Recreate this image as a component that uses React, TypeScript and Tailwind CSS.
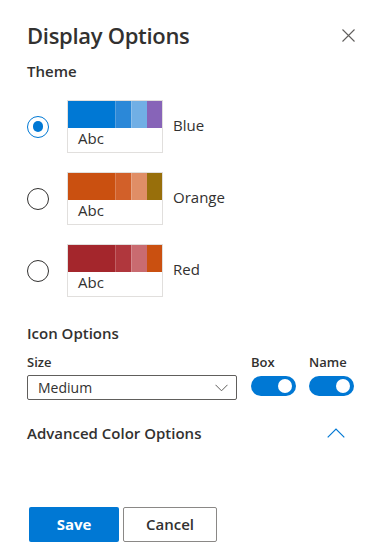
import React, { useState } from "react";

const themes = [
  {
    name: "Blue",
    colors: ["#0078d4", "#2b88d8", "#71afe5", "#8764b8"],
  },
  {
    name: "Orange",
    colors: ["#ca5010", "#d26029", "#e08e66", "#986f0b"],
  },
  {
    name: "Red",
    colors: ["#a4262c", "#b0373d", "#c96b70", "#ca5010"],
  },
];

const Toggle = ({ on }: { on: boolean }) => (
  <div
    className={`w-[45px] h-[20px] rounded-full flex items-center px-[4px] ${
      on ? "bg-[#0078d4] justify-end" : "bg-white border border-[#605e5c] justify-start"
    }`}
  >
    <div className={`w-[14px] h-[14px] rounded-full ${on ? "bg-white" : "bg-[#605e5c]"}`} />
  </div>
);

const App = () => {
  const [theme, setTheme] = useState("Blue");

  return (
    <div
      className="w-[382px] h-[549px] bg-white px-[27px] text-[#323130] overflow-hidden"
      style={{ fontFamily: '"Open Sans", "Noto Sans", sans-serif' }}
    >
      {/* Header */}
      <div className="flex items-start justify-between pt-[19px]">
        <h1 className="text-[22px] font-semibold leading-[32px] tracking-[-0.3px]">
          Display Options
        </h1>
        <button className="mt-[10px] w-[13px] h-[13px] text-[#605e5c]">
          <svg width="13" height="13" viewBox="0 0 13 13">
            <path d="M0.5 0.5 L12.5 12.5 M12.5 0.5 L0.5 12.5" stroke="currentColor" strokeWidth="1.1" />
          </svg>
        </button>
      </div>

      {/* Theme */}
      <div className="mt-[10px] text-[15px] font-semibold leading-[20px]">Theme</div>

      <div className="mt-[19px] flex flex-col gap-[19px]">
        {themes.map((t) => (
          <div key={t.name} className="flex items-center" onClick={() => setTheme(t.name)}>
            <div
              className={`w-[22px] h-[22px] rounded-full border flex items-center justify-center ${
                theme === t.name ? "border-[#0078d4]" : "border-[#323130]"
              }`}
            >
              {theme === t.name && <div className="w-[10px] h-[11px] rounded-full bg-[#0078d4]" />}
            </div>
            <div className="ml-[18px] w-[96px] h-[53px] border border-[#e1dfdd] flex flex-col">
              <div className="flex h-[27px]">
                <div className="w-[47px]" style={{ background: t.colors[0] }} />
                <div className="w-[16px] border-l border-white/20" style={{ background: t.colors[1] }} />
                <div className="w-[16px] border-l border-white/20" style={{ background: t.colors[2] }} />
                <div className="w-[15px]" style={{ background: t.colors[3] }} />
              </div>
              <div className="pl-[10px] text-[15px] leading-[20px]">Abc</div>
            </div>
            <span className="ml-[10px] text-[15px] mb-[2px]">{t.name}</span>
          </div>
        ))}
      </div>

      {/* Icon Options */}
      <div className="mt-[26px] text-[15px] font-semibold leading-[20px]">Icon Options</div>

      <div className="mt-[9px] flex items-start">
        <div className="w-[210px]">
          <div className="text-[13px] font-semibold leading-[20px]">Size</div>
          <div className="mt-[3px] h-[25px] border border-[#605e5c] rounded-[2px] flex items-center justify-between pl-[10px] pr-[8px]">
            <span className="text-[14px]">Medium</span>
            <svg width="13" height="8" viewBox="0 0 13 8" className="text-[#605e5c]">
              <path d="M0.5 0.8 L6.5 6.8 L12.5 0.8" fill="none" stroke="currentColor" strokeWidth="1" />
            </svg>
          </div>
        </div>
        <div className="ml-[14px]">
          <div className="text-[13px] font-semibold leading-[20px]">Box</div>
          <div className="mt-[4px]">
            <Toggle on />
          </div>
        </div>
        <div className="ml-[13px]">
          <div className="text-[13px] font-semibold leading-[20px]">Name</div>
          <div className="mt-[4px]">
            <Toggle on />
          </div>
        </div>
      </div>

      {/* Advanced */}
      <div className="mt-[22px] flex items-center justify-between">
        <span className="text-[15px] font-semibold leading-[22px]">Advanced Color Options</span>
        <svg width="18" height="10" viewBox="0 0 18 10" className="mr-[10px] text-[#0078d4]">
          <path d="M0.7 9.3 L9 1 L17.3 9.3" fill="none" stroke="currentColor" strokeWidth="1.2" />
        </svg>
      </div>

      {/* Footer */}
      <div className="mt-[63px] ml-[2px] flex gap-[4px]">
        <button className="w-[90px] h-[35px] rounded-[2px] bg-[#0078d4] text-white text-[15px] font-bold">
          Save
        </button>
        <button className="w-[94px] h-[35px] rounded-[2px] border border-[#8a8886] bg-white text-[#323130] text-[15px] font-semibold">
          Cancel
        </button>
      </div>
    </div>
  );
};

export default App;
